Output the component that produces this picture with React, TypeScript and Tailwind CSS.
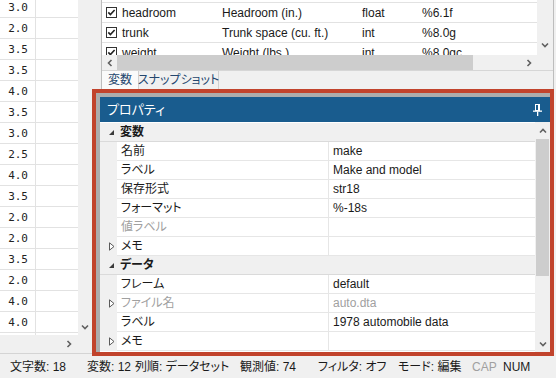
import React from "react";

function Chev({ dir }: { dir: "up" | "down" | "left" | "right" }) {
  const d = {
    down: "M1 2.5 L4 5.5 L7 2.5",
    up: "M1 5.5 L4 2.5 L7 5.5",
    left: "M5.5 1 L2.5 4 L5.5 7",
    right: "M2.5 1 L5.5 4 L2.5 7",
  }[dir];
  return (
    <svg width="8" height="8" viewBox="0 0 8 8">
      <path d={d} fill="none" stroke="#606060" strokeWidth="1.6" />
    </svg>
  );
}

function Check() {
  return (
    <svg width="11" height="11" viewBox="0 0 11 11">
      <rect x="0.5" y="0.5" width="10" height="10" fill="white" stroke="#333" />
      <path d="M2.3 5.4 L4.4 7.6 L8.6 3" fill="none" stroke="#222" strokeWidth="1.6" />
    </svg>
  );
}

function Expanded() {
  return (
    <svg width="7" height="7" viewBox="0 0 7 7">
      <path d="M6 1 L6 6 L1 6 Z" fill="#3a3a3a" />
    </svg>
  );
}

function Collapsed() {
  return (
    <svg width="6" height="9" viewBox="0 0 6 9">
      <path d="M0.5 0.8 L5 4.5 L0.5 8.2 Z" fill="white" stroke="#5a5a5a" strokeWidth="1" />
    </svg>
  );
}

function Pin() {
  return (
    <svg width="11" height="12" viewBox="0 0 11 12">
      <rect x="3.5" y="0.5" width="4" height="6" fill="none" stroke="white" strokeWidth="1" />
      <rect x="6" y="1" width="1.5" height="5.5" fill="white" />
      <rect x="1" y="6.5" width="9" height="1.3" fill="white" />
      <rect x="5" y="7.5" width="1.3" height="4.5" fill="white" />
    </svg>
  );
}

const dataVals = [
  "3.0", "2.0", "3.5", "3.5", "4.0", "3.5", "3.0", "2.5", "4.0",
  "3.5", "2.0", "2.0", "3.5", "2.0", "4.0", "4.0",
];

const varRows = [
  { name: "headroom", label: "Headroom (in.)", type: "float", fmt: "%6.1f" },
  { name: "trunk", label: "Trunk space (cu. ft.)", type: "int", fmt: "%8.0g" },
  { name: "weight", label: "Weight (lbs.)", type: "int", fmt: "%8.0gc" },
];

type PRow = { cat?: boolean; label: string; value?: string; dim?: boolean; exp?: boolean };
const propRows: PRow[] = [
  { cat: true, label: "変数" },
  { label: "名前", value: "make" },
  { label: "ラベル", value: "Make and model" },
  { label: "保存形式", value: "str18" },
  { label: "フォーマット", value: "%-18s" },
  { label: "値ラベル", value: "", dim: true },
  { label: "メモ", value: "", exp: true },
  { cat: true, label: "データ" },
  { label: "フレーム", value: "default" },
  { label: "ファイル名", value: "auto.dta", dim: true, exp: true },
  { label: "ラベル", value: "1978 automobile data" },
  { label: "メモ", value: "", exp: true },
];

export default function App() {
  return (
    <div className="w-[556px] h-[378px] bg-[#f0f0f0] flex flex-col overflow-hidden text-[12px] leading-none text-[#1a1a1a] font-['Liberation_Sans','Noto_Sans_CJK_JP',sans-serif] [font-feature-settings:'palt']">
      <div className="flex h-[356px]">
        {/* left data panel */}
        <div className="w-[92px] shrink-0 flex flex-col">
          <div className="flex h-[335px]">
            <div className="w-[78px] bg-white overflow-hidden">
              <div className="mt-[-3px]">
                {dataVals.map((v, i) => (
                  <div key={i} className="flex h-[21px] border-b border-[#e2e2e2]">
                    <div className="w-[36px] border-r border-[#e2e2e2] flex items-center justify-end pr-[7px] font-['DejaVu_Sans_Mono',monospace] text-[11px] text-[#222]">
                      {v}
                    </div>
                    <div className="flex-1" />
                  </div>
                ))}
                <div className="flex h-[21px]">
                  <div className="w-[36px] border-r border-[#e2e2e2]" />
                  <div className="flex-1" />
                </div>
              </div>
            </div>
            <div className="w-[14px] bg-[#f0f0f0] flex flex-col justify-end items-center">
              <div className="h-[17px] flex items-center">
                <Chev dir="down" />
              </div>
            </div>
          </div>
          <div className="h-[19px] border-b border-[#d4d4d4] flex">
            <div className="w-[78px] flex justify-end items-center pr-[5px]">
              <Chev dir="right" />
            </div>
          </div>
        </div>

        {/* right panel */}
        <div className="flex-1 flex flex-col">
          <div className="h-[89px] flex shrink-0">
            <div className="w-[9px]" />
            <div className="w-[453px] border-l border-r border-[#bdbdbd] flex flex-col">
              <div className="flex h-[55px]">
                <div className="flex-1 bg-white overflow-hidden">
                  <div className="h-[3px] border-b border-[#e2e2e2]" />
                  {varRows.map((r) => (
                    <div key={r.name} className="flex h-[20px] border-b border-[#e2e2e2] items-center">
                      <div className="w-[20px] pl-[4px] flex items-center">
                        <Check />
                      </div>
                      <div className="w-[96px] whitespace-nowrap">{r.name}</div>
                      <div className="w-[140px] pl-[4px] whitespace-nowrap">{r.label}</div>
                      <div className="w-[60px] pl-[4px] whitespace-nowrap">{r.type}</div>
                      <div className="flex-1 pl-[4px] whitespace-nowrap">{r.fmt}</div>
                    </div>
                  ))}
                </div>
                <div className="w-[16px] bg-[#f0f0f0] flex flex-col justify-end items-center pb-[3px]">
                  <div className="h-[14px] flex items-center">
                    <Chev dir="down" />
                  </div>
                </div>
              </div>
              <div className="flex h-[15px]">
                <div className="flex-1 flex bg-[#f0f0f0]">
                  <div className="w-[15px] flex items-center justify-center">
                    <Chev dir="left" />
                  </div>
                  <div className="w-[356px] bg-[#cdcdcd]" />
                  <div className="flex-1" />
                  <div className="w-[16px] flex items-center justify-center">
                    <Chev dir="right" />
                  </div>
                </div>
                <div className="w-[16px] bg-[#f0f0f0]" />
              </div>
              <div className="flex-1 flex border-t border-[#d6d6d6] bg-[#f0f0f0]">
                <div className="w-[37px] bg-[#fafafa] border-r border-[#d0d0d0] flex items-center justify-center text-[#24466e]">
                  変数
                </div>
                <div className="w-[80px] border-r border-[#d0d0d0] flex items-center justify-center text-[#24466e] whitespace-nowrap">
                  スナップショット
                </div>
              </div>
            </div>
          </div>

          {/* properties pane with red highlight */}
          <div className="flex-1 mr-[2px] border-4 border-[#c1432c] flex flex-col min-h-0">
            <div className="flex-1 border-l-4 border-t-4 border-[#acacac] flex flex-col bg-white min-h-0">
              <div className="h-[25px] shrink-0 bg-[#195c8e] flex items-center justify-between pl-[7px] pr-[7px] text-white text-[13px]">
                <span>プロパティ</span>
                <Pin />
              </div>
              <div className="flex-1 flex min-h-0">
                <div className="flex-1 flex flex-col pt-[1px] overflow-hidden">
                  {propRows.map((r, i) =>
                    r.cat ? (
                      <div key={i} className="flex h-[19px] shrink-0 bg-[#f0f0f0] border-b border-[#dadada] items-center">
                        <div className="w-[17px] flex items-center pl-[8px]">
                          <Expanded />
                        </div>
                        <div className="pl-[3px] font-bold">{r.label}</div>
                      </div>
                    ) : (
                      <div key={i} className="flex h-[19px] shrink-0">
                        <div className="w-[17px] bg-[#f0f0f0] flex items-center pl-[9px]">
                          {r.exp && <Collapsed />}
                        </div>
                        <div
                          className={
                            "w-[211px] border-b border-[#e6e6e6] flex items-center pl-[4px] whitespace-nowrap " +
                            (r.dim ? "text-[#a0a0a0]" : "")
                          }
                        >
                          {r.label}
                        </div>
                        <div
                          className={
                            "flex-1 border-b border-l border-[#e6e6e6] flex items-center pl-[4px] whitespace-nowrap " +
                            (r.dim ? "text-[#a0a0a0]" : "")
                          }
                        >
                          {r.value}
                        </div>
                      </div>
                    )
                  )}
                </div>
                <div className="w-[15px] bg-[#f0f0f0] flex flex-col items-center">
                  <div className="h-[17px] flex items-center">
                    <Chev dir="up" />
                  </div>
                  <div className="w-[13px] h-[137px] bg-[#cdcdcd]" />
                  <div className="flex-1" />
                  <div className="h-[17px] flex items-center">
                    <Chev dir="down" />
                  </div>
                </div>
              </div>
            </div>
          </div>
        </div>
      </div>

      {/* status bar */}
      <div className="h-[22px] flex items-center pl-[10px] bg-[#f0f0f0] whitespace-nowrap">
        <span className="w-[77px] shrink-0">文字数: 18</span>
        <span className="w-[48px] shrink-0">変数: 12</span>
        <span className="w-[105px] shrink-0">列順: データセット</span>
        <span className="w-[78px] shrink-0">観測値: 74</span>
        <span className="w-[80px] shrink-0">フィルタ: オフ</span>
        <span className="w-[74px] shrink-0">モード: 編集</span>
        <span className="w-[31px] shrink-0 text-[#a0a0a0]">CAP</span>
        <span className="shrink-0">NUM</span>
      </div>
    </div>
  );
}
